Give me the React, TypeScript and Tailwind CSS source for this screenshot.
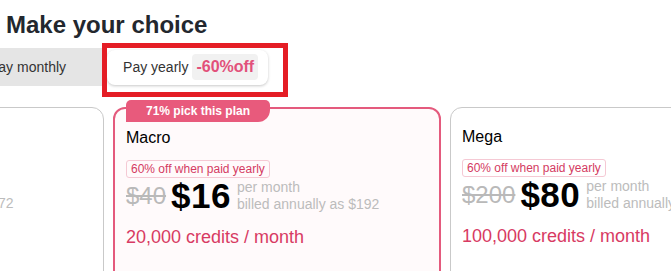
import React from 'react'

interface Plan {
  name: string
  was: string
  now: string
  billed: string
  credits: string
  popular?: boolean
}

const plans: Plan[] = [
  { name: 'Micro', was: '$15', now: '$6', billed: 'billed annually as $72', credits: '10,000 credits / month' },
  { name: 'Macro', was: '$40', now: '$16', billed: 'billed annually as $192', credits: '20,000 credits / month', popular: true },
  { name: 'Mega', was: '$200', now: '$80', billed: 'billed annually as $960', credits: '100,000 credits / month' },
]

function PlanCard({ plan }: { plan: Plan }) {
  return (
    <div
      className={`relative h-[220px] w-[328px] shrink-0 rounded-[12px] px-[11px] pt-[20px] ${
        plan.popular ? 'border-2 border-[#e45a7d] bg-[#fffafb]' : 'border border-[#c9c9c9] bg-white'
      }`}
    >
      {plan.popular && (
        <div className="absolute -top-[9px] left-[11px] rounded-t-[5px] rounded-br-[12px] bg-[#e85a7c] px-[20px] text-[12px] font-bold leading-[22px] text-white">
          71% pick this plan
        </div>
      )}
      <div className="text-[16px] leading-[18px] text-black">{plan.name}</div>
      <div className="mt-[13px] w-fit rounded-[3px] border border-[#f5c9d4] px-[4px] py-[1px] text-[12px] leading-[14px] text-[#d43b62]">
        60% off when paid yearly
      </div>
      <div className="flex h-[36px] items-center">
        <span className="text-[24px] leading-[28px] text-[#b9b9b9] line-through">{plan.was}</span>
        <span className="ml-[5px] text-[35px] font-bold leading-[36px] tracking-[0.5px] text-black">{plan.now}</span>
        <div className="ml-[6px] whitespace-nowrap text-[14px] leading-[17px] text-[#bcbcbc]">
          <div>per month</div>
          <div>{plan.billed}</div>
        </div>
      </div>
      <div className="mt-[13px] text-[18px] leading-[21px] text-[#d83a63]">{plan.credits}</div>
    </div>
  )
}

export default function App() {
  return (
    <div className="relative h-[271px] w-[671px] overflow-hidden bg-white font-['Liberation_Sans',Arial,sans-serif]">
      <h1 className="pl-[6px] pt-[11px] text-[24px] font-bold leading-[28px] text-[#23272e]">Make your choice</h1>

      <div className="-ml-[52px] mt-[9px] flex items-center">
        <button className="h-[38px] bg-[#e5e5e5] px-[41px] text-[14px] text-[#333]">Pay monthly</button>
        <button className="flex h-[35px] items-center gap-[4px] rounded-[8px] bg-white pl-[16px] pr-[10px] text-[14px] text-[#333] shadow-[0_1px_3px_rgba(0,0,0,0.22)]">
          Pay yearly
          <span className="rounded-[4px] bg-[#f1f1f1] px-[4px] text-[16px] font-bold leading-[26px] text-[#e2507a]">-60%off</span>
        </button>
      </div>

      <div className="-ml-[224px] mt-[21px] flex gap-[9px]">
        {plans.map(p => (
          <PlanCard key={p.name} plan={p} />
        ))}
      </div>

      <div className="pointer-events-none absolute left-[102px] top-[43px] h-[54px] w-[186px] border-[5px] border-[#e41d25]" />
    </div>
  )
}
